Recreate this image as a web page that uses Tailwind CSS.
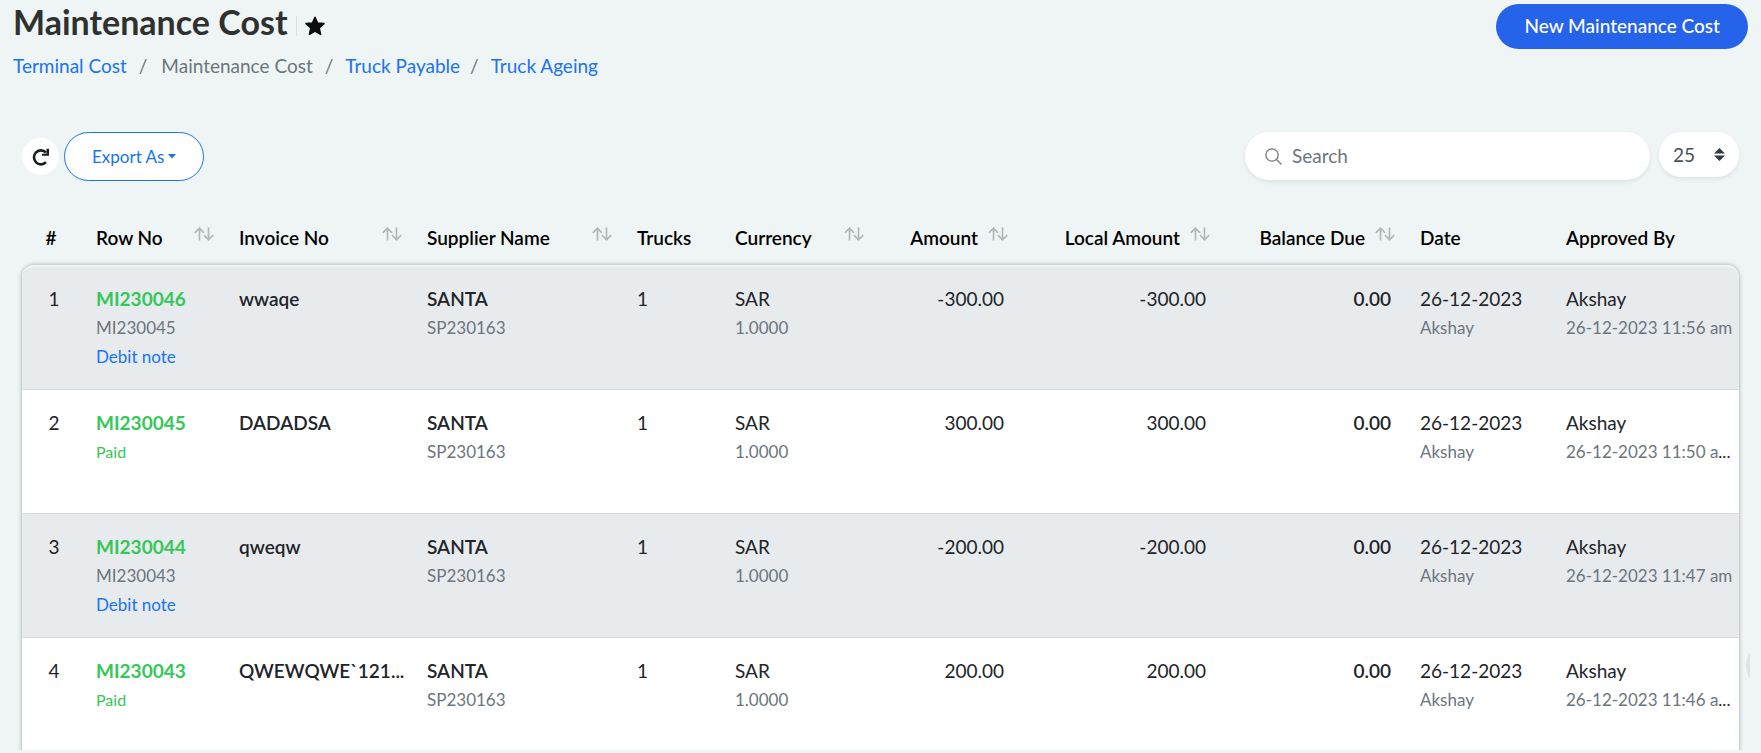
<!DOCTYPE html>
<html lang="en">
<head>
<meta charset="utf-8">
<title>Maintenance Cost</title>
<script src="https://cdn.jsdelivr.net/npm/@tailwindcss/browser@4"></script>
</head>
<body class="relative flex h-screen flex-col overflow-hidden bg-[#eff5f5] pb-[3px] font-['Lato',sans-serif] text-[19px] leading-7 text-[#212529]">
<svg class="hidden"><symbol id="sort" viewBox="0 0 20 14" fill="none" stroke="#b3b6b6" stroke-width="1.7"><path d="M5.5 13.5V1.5M.8 5.8 5.5 1.2 10 5.8M14.5.5v12M10 8.2l4.500 4.600 4.700-4.600"/></symbol></svg>

<header class="flex items-start justify-between px-[13px] pt-1">
  <div>
    <div class="flex h-9 items-center">
      <h1 class="text-[34px] leading-9 font-bold text-[#2f3131]">Maintenance Cost</h1>
      <span class="mt-2 ml-2 h-5 w-px bg-[#dadfe0]"></span>
      <button type="button" aria-label="Favourite" class="mt-2 ml-2">
        <svg class="h-5 w-5" viewBox="0 0 20 20" fill="#0b0c0c" stroke="#0b0c0c" stroke-width="1.500" stroke-linejoin="round"><path d="M10 1.200 12.500 6.900 19 7.600 14.200 11.900 15.600 18.400 10 15.200 4.400 18.400 5.800 11.900 1 7.600 7.500 6.900Z"/></svg>
      </button>
    </div>
    <nav aria-label="Breadcrumb" class="mt-3 flex text-[19px] text-[#6c757d]">
      <a href="#" class="text-[#1a73ef]">Terminal Cost</a><span class="mr-[14px] ml-3">/</span>
      <span>Maintenance Cost</span><span class="mr-3 ml-3">/</span>
      <a href="#" class="text-[#1a73ef]">Truck Payable</a><span class="mr-3 ml-[10px]">/</span>
      <a href="#" class="text-[#1a73ef]">Truck Ageing</a>
    </nav>
  </div>
  <button type="button" class="h-[45px] rounded-full bg-[#2563eb] px-7 pb-[2px] text-[19px] font-medium text-white">New Maintenance Cost</button>
</header>

<section class="mt-[52px] flex items-start justify-between px-[22px]">
  <div class="flex items-center gap-[5px]">
    <button type="button" aria-label="Refresh" class="flex h-[37px] w-[37px] items-center justify-center rounded-full bg-white">
      <svg class="h-[18px] w-[18px]" viewBox="0 0 18 18" fill="none" stroke="#1b1f23" stroke-width="2.600"><path d="M14 14.200A7 7 0 1 1 14 4.500"/><path d="M17 .8v7h-7V5.800h4.500V.8Z" fill="#1b1f23" stroke="none"/></svg>
    </button>
    <button type="button" class="flex h-[49px] items-center gap-1 rounded-full border border-[#1a73ef] bg-white px-[27px] text-[17px] text-[#1a73ef]">Export As
      <svg class="h-[5px] w-2" viewBox="0 0 8 5" fill="currentColor"><path d="M0 0h8L4 4.500Z"/></svg>
    </button>
  </div>
  <div class="flex items-start gap-[9px]">
    <label class="flex h-12 w-[405px] items-center gap-[10px] rounded-full bg-white pl-5 shadow-[0_2px_4px_rgba(0,0,0,0.08)]">
      <svg class="h-[17px] w-[17px]" viewBox="0 0 17 17" fill="none" stroke="#777" stroke-width="1.300"><circle cx="7" cy="7" r="6.200"/><path d="m11.500 11.500 5 5"/></svg>
      <input type="text" aria-label="Search" placeholder="Search" class="w-80 text-[19px] outline-none placeholder:text-[#6c757d]">
    </label>
    <div class="relative">
      <select aria-label="Rows per page" class="h-[45px] w-20 appearance-none rounded-[22px] bg-white pl-[14px] text-[19px] text-[#495057] shadow-[0_2px_4px_rgba(0,0,0,0.08)]"><option>25</option></select>
      <svg class="pointer-events-none absolute top-4 right-[14px] h-[13px] w-[11px]" viewBox="0 0 11 13" fill="#343a40"><path d="M0 5.500h11L5.500 0ZM0 7.500h11L5.500 13Z"/></svg>
    </div>
  </div>
</section>

<main class="mt-7 min-h-0 flex-1 overflow-hidden px-[22px]">
  <table class="w-full table-fixed border-separate border-spacing-0 text-left whitespace-nowrap">
    <colgroup><col class="w-[61px]"><col class="w-[143px]"><col class="w-[188px]"><col class="w-[210px]"><col class="w-[98px]"><col class="w-[154px]"><col class="w-[144px]"><col class="w-[202px]"><col class="w-[185px]"><col class="w-[146px]"><col class="w-[186px]"></colgroup>
    <thead class="text-black [&_th]:h-14 [&_th]:pt-px [&_th]:pr-3 [&_th]:pl-[13px] [&_th]:font-semibold [&_button]:flex [&_button]:w-full [&_button]:justify-between [&_svg]:mt-[3px] [&_svg]:h-[14px] [&_svg]:w-5">
      <tr>
        <th class="pr-4! text-center">#</th>
        <th><button type="button">Row No <svg><use href="#sort"/></svg></button></th>
        <th><button type="button">Invoice No <svg><use href="#sort"/></svg></button></th>
        <th><button type="button">Supplier Name <svg><use href="#sort"/></svg></button></th>
        <th>Trucks</th>
        <th><button type="button">Currency <svg><use href="#sort"/></svg></button></th>
        <th><button type="button" class="justify-end! gap-[10px]">Amount <svg><use href="#sort"/></svg></button></th>
        <th><button type="button" class="justify-end! gap-[10px]">Local Amount <svg><use href="#sort"/></svg></button></th>
        <th><button type="button" class="justify-end! gap-[10px]">Balance Due <svg><use href="#sort"/></svg></button></th>
        <th>Date</th>
        <th>Approved By</th>
      </tr>
    </thead>
    <tbody class="rounded-t-xl shadow-[0_0_4px_rgba(0,0,0,0.35)] [&_td]:h-[124px] [&_td]:border-b [&_td]:border-[#d9dcde] [&_td]:pt-[19px] [&_td]:pl-[13px] [&_td]:align-top [&_p]:text-[17px] [&_p]:leading-[29px] [&_p]:text-[#6c757d]">
      <tr class="[&>td]:h-[125px]! [&>td]:border-t-2 [&>td]:border-t-[#eff5f5] [&>td]:bg-[#e8ebee] [&>td]:pt-[18px]!">
        <td class="rounded-tl-xl pr-[10px] text-center">1</td>
        <td><a href="#" class="font-bold text-[#34c759]">MI230046</a><p>MI230045</p><p><a href="#" class="text-[#1a73ef]">Debit note</a></p></td>
        <td class="font-semibold">wwaqe</td>
        <td><span class="font-semibold">SANTA</span><p>SP230163</p></td>
        <td>1</td>
        <td>SAR<p>1.0000</p></td>
        <td class="pr-4 text-right">-300.00</td>
        <td class="pr-4 text-right">-300.00</td>
        <td class="pr-4 text-right font-semibold">0.00</td>
        <td>26-12-2023<p>Akshay</p></td>
        <td class="rounded-tr-xl">Akshay<p>26-12-2023 11:56 am</p></td>
      </tr>
      <tr class="[&>td]:bg-white">
        <td class="pr-[10px] text-center">2</td>
        <td><a href="#" class="font-bold text-[#34c759]">MI230045</a><p><span class="text-[16px] text-[#34c759]">Paid</span></p></td>
        <td class="font-semibold">DADADSA</td>
        <td><span class="font-semibold">SANTA</span><p>SP230163</p></td>
        <td>1</td>
        <td>SAR<p>1.0000</p></td>
        <td class="pr-4 text-right">300.00</td>
        <td class="pr-4 text-right">300.00</td>
        <td class="pr-4 text-right font-semibold">0.00</td>
        <td>26-12-2023<p>Akshay</p></td>
        <td>Akshay<p>26-12-2023 11:50 a<span class="text-[#212529]">...</span></p></td>
      </tr>
      <tr class="[&>td]:bg-[#e8ebee]">
        <td class="pr-[10px] text-center">3</td>
        <td><a href="#" class="font-bold text-[#34c759]">MI230044</a><p>MI230043</p><p><a href="#" class="text-[#1a73ef]">Debit note</a></p></td>
        <td class="font-semibold">qweqw</td>
        <td><span class="font-semibold">SANTA</span><p>SP230163</p></td>
        <td>1</td>
        <td>SAR<p>1.0000</p></td>
        <td class="pr-4 text-right">-200.00</td>
        <td class="pr-4 text-right">-200.00</td>
        <td class="pr-4 text-right font-semibold">0.00</td>
        <td>26-12-2023<p>Akshay</p></td>
        <td>Akshay<p>26-12-2023 11:47 am</p></td>
      </tr>
      <tr class="[&>td]:bg-white">
        <td class="pr-[10px] text-center">4</td>
        <td><a href="#" class="font-bold text-[#34c759]">MI230043</a><p><span class="text-[16px] text-[#34c759]">Paid</span></p></td>
        <td class="font-semibold">QWEWQWE`121...</td>
        <td><span class="font-semibold">SANTA</span><p>SP230163</p></td>
        <td>1</td>
        <td>SAR<p>1.0000</p></td>
        <td class="pr-4 text-right">200.00</td>
        <td class="pr-4 text-right">200.00</td>
        <td class="pr-4 text-right font-semibold">0.00</td>
        <td>26-12-2023<p>Akshay</p></td>
        <td>Akshay<p>26-12-2023 11:46 a<span class="text-[#212529]">...</span></p></td>
      </tr>
    </tbody>
  </table>
</main>
<div class="absolute right-[11px] bottom-[65px] h-11 w-1 overflow-hidden"><div class="h-11 w-11 rounded-full bg-[#dfe3e4]"></div></div>
</body>
</html>
